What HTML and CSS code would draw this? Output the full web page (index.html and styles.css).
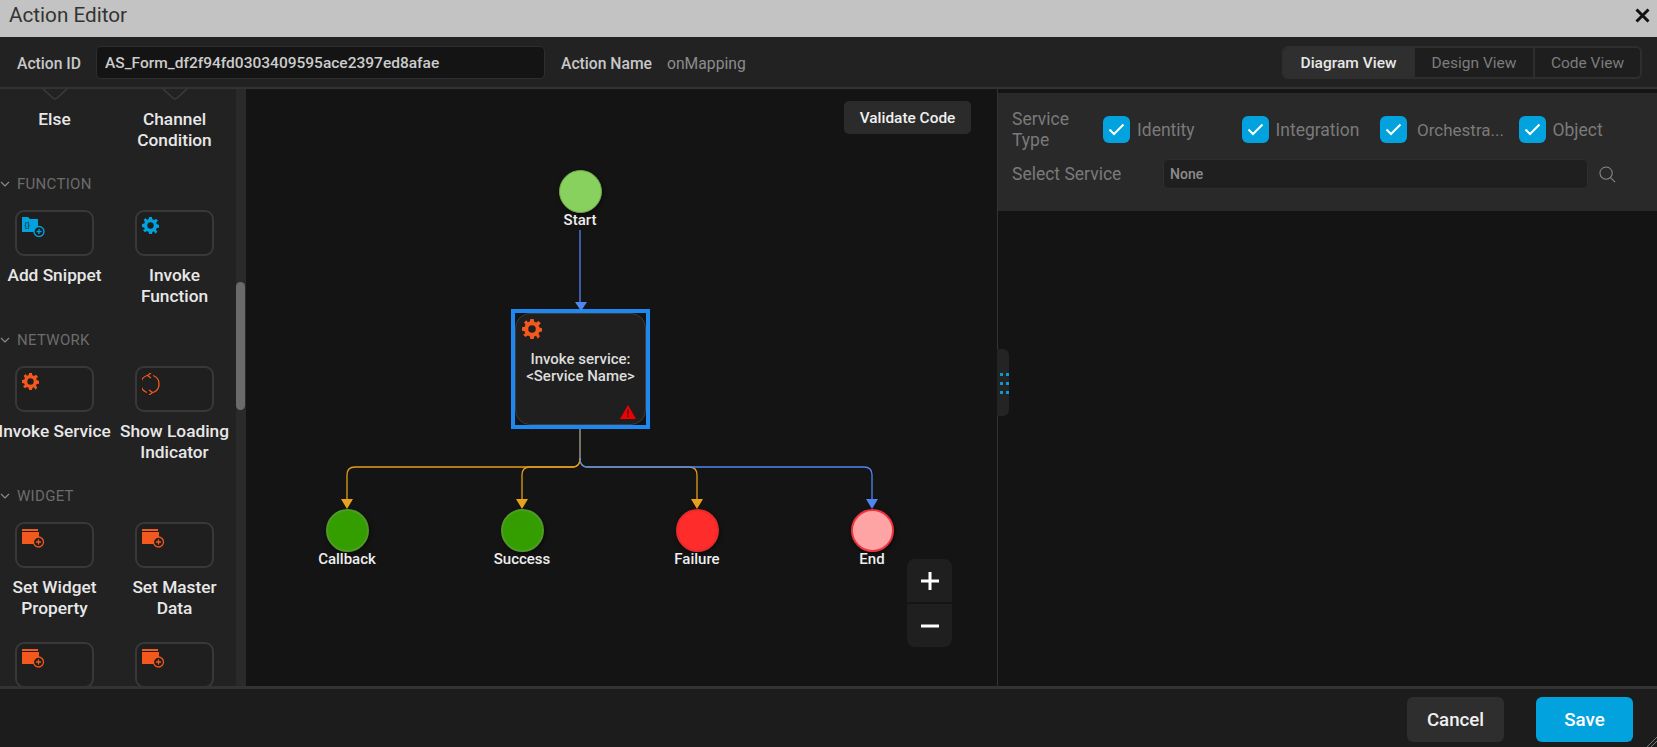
FILE: index.html
```html
<!DOCTYPE html>
<html lang="en">
<head>
    <meta charset="UTF-8">
    <title>Action Editor</title>
    <link rel="stylesheet" href="styles.css">
</head>
<body>
<div class="titlebar">
    <span class="title">Action Editor</span>
    <svg class="close" width="15" height="15" viewBox="0 0 15 15"><path d="M1.500 1.500 L13.500 13.500 M13.500 1.500 L1.500 13.500" stroke="#111" stroke-width="3"/></svg>
</div>

<div class="header">
    <label class="id-label">Action ID</label>
    <div class="id-input">AS_Form_df2f94fd0303409595ace2397ed8afae</div>
    <label class="name-label">Action Name</label>
    <span class="name-value">onMapping</span>
    <div class="tabs">
        <div class="tab tab-diagram active">Diagram View</div>
        <div class="tab tab-design">Design View</div>
        <div class="tab tab-code">Code View</div>
    </div>
</div>

<div class="main">
    <div class="palette">
        <div class="palette-list">
            <div class="tool-row top-row">
                <div class="tool">
                    <svg class="tips" width="30" height="11" viewBox="0 0 30 11"><path d="M3 0 L13 9 Q15 10.500 17 9 L27 0" fill="none" stroke="#3c3c3c" stroke-width="1.500"/></svg>
                    <div class="tool-name">Else</div>
                </div>
                <div class="tool">
                    <svg class="tips" width="30" height="11" viewBox="0 0 30 11"><path d="M3 0 L13 9 Q15 10.500 17 9 L27 0" fill="none" stroke="#3c3c3c" stroke-width="1.500"/></svg>
                    <div class="tool-name">Channel<br>Condition</div>
                </div>
            </div>

            <div class="section"><svg class="chev" width="10" height="6" viewBox="0 0 10 6"><path d="M1 1 L5 5 L9 1" fill="none" stroke="#8a8a8a" stroke-width="1.200"/></svg>FUNCTION</div>
            <div class="tool-row">
                <div class="tool">
                    <div class="tool-box">
                        <svg class="tool-icon" width="23" height="20" viewBox="0 0 23 20">
                            <path d="M0 0 H6 L8 2 H16 V15 H0 Z" fill="#02a2de"/>
                            <text x="2.500" y="10" class="snippet-mark">{}</text>
                            <circle cx="17" cy="14.500" r="5" fill="#1f1f1f" stroke="#02a2de" stroke-width="1.300"/>
                            <path d="M14.500 14.500 H19.500 M17 12 V17" stroke="#02a2de" stroke-width="1.300"/>
                        </svg>
                    </div>
                    <div class="tool-name">Add Snippet</div>
                </div>
                <div class="tool">
                    <div class="tool-box">
                        <svg class="tool-icon" width="17" height="17" viewBox="0 0 24 24"><path fill="#02a2de" fill-rule="evenodd" d="M10 0h4l.7 3.200 2.300 1 2.800-1.800 2.800 2.800L20 8l1 2.300 3 .7v4l-3.200.7-1 2.300 1.800 2.800-2.800 2.800L17 20l-2.300 1-.7 3h-4l-.7-3.200-2.300-1-2.800 1.800-2.800-2.800L4 17l-1-2.300-3-.7v-4l3.200-.7 1-2.300-1.800-2.800 2.800-2.800L7 4l2.300-1zM12 7.500a4.500 4.500 0 1 0 0 9 4.500 4.500 0 0 0 0-9z"/></svg>
                    </div>
                    <div class="tool-name">Invoke<br>Function</div>
                </div>
            </div>

            <div class="section"><svg class="chev" width="10" height="6" viewBox="0 0 10 6"><path d="M1 1 L5 5 L9 1" fill="none" stroke="#8a8a8a" stroke-width="1.200"/></svg>NETWORK</div>
            <div class="tool-row">
                <div class="tool">
                    <div class="tool-box">
                        <svg class="tool-icon" width="17" height="17" viewBox="0 0 24 24"><path fill="#f3591c" fill-rule="evenodd" d="M10 0h4l.7 3.200 2.300 1 2.800-1.800 2.800 2.800L20 8l1 2.300 3 .7v4l-3.200.7-1 2.300 1.800 2.800-2.800 2.800L17 20l-2.300 1-.7 3h-4l-.7-3.200-2.300-1-2.800 1.800-2.800-2.800L4 17l-1-2.300-3-.7v-4l3.200-.7 1-2.300-1.800-2.800 2.800-2.800L7 4l2.300-1zM12 7.500a4.500 4.500 0 1 0 0 9 4.500 4.500 0 0 0 0-9z"/></svg>
                    </div>
                    <div class="tool-name">Invoke Service</div>
                </div>
                <div class="tool">
                    <div class="tool-box">
                        <svg class="tool-icon" width="20" height="22" viewBox="2 0 20 22" fill="none" stroke="#f3591c" stroke-width="1.300"><path d="M7 2.500 A9 9 0 0 0 7 19.500"/><path d="M13 2.500 A9 9 0 0 1 13 19.500"/><path d="M11 0 L7.500 2.500 L11 5"/><path d="M9 17 L12.500 19.500 L9 22"/></svg>
                    </div>
                    <div class="tool-name">Show Loading<br>Indicator</div>
                </div>
            </div>

            <div class="section"><svg class="chev" width="10" height="6" viewBox="0 0 10 6"><path d="M1 1 L5 5 L9 1" fill="none" stroke="#8a8a8a" stroke-width="1.200"/></svg>WIDGET</div>
            <div class="tool-row">
                <div class="tool">
                    <div class="tool-box">
                        <svg class="tool-icon" width="23" height="19" viewBox="0 0 23 19"><path d="M0 0 H16 V2 H0 Z M0 3 H17 V15 H0 Z" fill="#f3591c"/><circle cx="16.500" cy="13" r="5" fill="#1f1f1f" stroke="#f3591c" stroke-width="1.300"/><path d="M14 13 H19 M16.500 10.500 V15.500" stroke="#f3591c" stroke-width="1.300"/></svg>
                    </div>
                    <div class="tool-name">Set Widget<br>Property</div>
                </div>
                <div class="tool">
                    <div class="tool-box">
                        <svg class="tool-icon" width="23" height="19" viewBox="0 0 23 19"><path d="M0 0 H16 V2 H0 Z M0 3 H17 V15 H0 Z" fill="#f3591c"/><circle cx="16.500" cy="13" r="5" fill="#1f1f1f" stroke="#f3591c" stroke-width="1.300"/><path d="M14 13 H19 M16.500 10.500 V15.500" stroke="#f3591c" stroke-width="1.300"/></svg>
                    </div>
                    <div class="tool-name">Set Master<br>Data</div>
                </div>
            </div>
            <div class="tool-row last-row">
                <div class="tool">
                    <div class="tool-box">
                        <svg class="tool-icon" width="23" height="19" viewBox="0 0 23 19"><path d="M0 0 H16 V2 H0 Z M0 3 H17 V15 H0 Z" fill="#f3591c"/><circle cx="16.500" cy="13" r="5" fill="#1f1f1f" stroke="#f3591c" stroke-width="1.300"/><path d="M14 13 H19 M16.500 10.500 V15.500" stroke="#f3591c" stroke-width="1.300"/></svg>
                    </div>
                </div>
                <div class="tool">
                    <div class="tool-box">
                        <svg class="tool-icon" width="23" height="19" viewBox="0 0 23 19"><path d="M0 0 H16 V2 H0 Z M0 3 H17 V15 H0 Z" fill="#f3591c"/><circle cx="16.500" cy="13" r="5" fill="#1f1f1f" stroke="#f3591c" stroke-width="1.300"/><path d="M14 13 H19 M16.500 10.500 V15.500" stroke="#f3591c" stroke-width="1.300"/></svg>
                    </div>
                </div>
            </div>
        </div>
    </div>
    <div class="scrolltrack"><div class="scrollthumb"></div></div>

    <div class="canvas">
        <svg class="wires" width="752" height="597" viewBox="246 89 752 597" fill="none" stroke-width="1.300">
            <path d="M580 230 V304" stroke="#4f86f0"/>
            <path d="M580 428 V458" stroke="#a9a39a"/>
            <path d="M580 458 Q580 467 573 467 H355 Q347 467 347 475 V500" stroke="#e39c1a"/>
            <path d="M580 458 Q580 467 573 467 H530 Q522 467 522 475 V500" stroke="#e39c1a"/>
            <path d="M580 458 Q580 467 587 467 H689 Q697 467 697 475 V500" stroke="#e39c1a"/>
            <path d="M580 458 Q580 467 587 467 H864 Q872 467 872 475 V500" stroke="#4f86f0"/>
            <path d="M341 499 H353 L347 509 Z" fill="#e8a01e"/>
            <path d="M516 499 H528 L522 509 Z" fill="#e8a01e"/>
            <path d="M691 499 H703 L697 509 Z" fill="#e8a01e"/>
            <path d="M866 499 H878 L872 509 Z" fill="#4f86f0"/>
        </svg>

        <button class="validate">Validate Code</button>

        <div class="node node-start"><div class="dot dot-start"></div><div class="node-label">Start</div></div>
        <div class="node node-callback"><div class="dot dot-green"></div><div class="node-label">Callback</div></div>
        <div class="node node-success"><div class="dot dot-green"></div><div class="node-label">Success</div></div>
        <div class="node node-failure"><div class="dot dot-red"></div><div class="node-label">Failure</div></div>
        <div class="node node-end"><div class="dot dot-end"></div><div class="node-label">End</div></div>

        <div class="step">
            <div class="step-inner">
                <svg class="step-gear" width="20" height="20" viewBox="0 0 24 24"><path fill="#f3591c" fill-rule="evenodd" d="M10 0h4l.7 3.200 2.300 1 2.800-1.800 2.800 2.800L20 8l1 2.300 3 .7v4l-3.200.7-1 2.300 1.800 2.800-2.800 2.800L17 20l-2.300 1-.7 3h-4l-.7-3.200-2.300-1-2.800 1.800-2.800-2.800L4 17l-1-2.300-3-.7v-4l3.200-.7 1-2.300-1.800-2.800 2.800-2.800L7 4l2.300-1zM12 7.500a4.500 4.500 0 1 0 0 9 4.500 4.500 0 0 0 0-9z"/></svg>
                <div class="step-text">Invoke service:<br>&lt;Service Name&gt;</div>
                <svg class="step-warn" width="16" height="14" viewBox="0 0 16 14"><path d="M8 0 L16 14 H0 Z" fill="#f00000"/><path d="M7.200 4.500 H8.800 L8.500 9.500 H7.500 Z M7.200 10.500 H8.800 V12 H7.200 Z" fill="#1f1f1f"/></svg>
            </div>
            <svg class="step-arrow" width="12" height="9" viewBox="0 0 12 9"><path d="M0 0 H12 L6 9 Z" fill="#4f86f0"/></svg>
        </div>

        <div class="zoomctl">
            <div class="zoom-btn"><svg width="18" height="18" viewBox="0 0 18 18"><path d="M9 0 V18 M0 9 H18" stroke="#fff" stroke-width="3"/></svg></div>
            <div class="zoom-btn"><svg width="18" height="18" viewBox="0 0 18 18"><path d="M0 9 H18" stroke="#fff" stroke-width="3"/></svg></div>
        </div>
    </div>

    <div class="props">
        <div class="handle">
            <span></span><span></span><span></span><span></span><span></span><span></span>
        </div>
        <div class="props-panel">
            <div class="type-row">
                <div class="prop-label type-label">Service<br>Type</div>
                <div class="check"><span class="box"><svg width="17" height="13" viewBox="0 0 17 13"><path d="M1.500 6.500 L6 11 L15.500 1.500" fill="none" stroke="#fff" stroke-width="2"/></svg></span><span class="check-text">Identity</span></div>
                <div class="check"><span class="box"><svg width="17" height="13" viewBox="0 0 17 13"><path d="M1.500 6.500 L6 11 L15.500 1.500" fill="none" stroke="#fff" stroke-width="2"/></svg></span><span class="check-text">Integration</span></div>
                <div class="check"><span class="box"><svg width="17" height="13" viewBox="0 0 17 13"><path d="M1.500 6.500 L6 11 L15.500 1.500" fill="none" stroke="#fff" stroke-width="2"/></svg></span><span class="check-text check-cut">Orchestra...</span></div>
                <div class="check"><span class="box"><svg width="17" height="13" viewBox="0 0 17 13"><path d="M1.500 6.500 L6 11 L15.500 1.500" fill="none" stroke="#fff" stroke-width="2"/></svg></span><span class="check-text">Object</span></div>
            </div>
            <div class="select-row">
                <div class="prop-label select-label">Select Service</div>
                <div class="select-input">None</div>
                <svg class="search" width="17" height="17" viewBox="0 0 18 18" fill="none" stroke="#8a8a8a" stroke-width="1.100"><circle cx="7.500" cy="7.500" r="6.500"/><path d="M12.200 12.200 L17 17"/></svg>
            </div>
        </div>
    </div>
</div>

<div class="footer">
    <button class="btn btn-cancel">Cancel</button>
    <button class="btn btn-save">Save</button>
    <svg class="grip" width="11" height="11" viewBox="0 0 11 11"><path d="M11 1 L1 11 M11 5 L5 11" stroke="#777" stroke-width="1"/></svg>
</div>
</body>
</html>
```

FILE: styles.css
```css
* {
    box-sizing: border-box;
}
html, body {
    height: 100%;
}
body {
    margin: 0;
    height: 747px;
    overflow: hidden;
    display: flex;
    flex-direction: column;
    background: #1c1c1c;
    font-family: Roboto, "Liberation Sans", sans-serif;
    color: #e6e6e6;
}

/* title bar */
.titlebar {
    height: 37px;
    flex: none;
    background: #c3c3c3;
    display: flex;
    align-items: center;
    justify-content: space-between;
    padding: 0 7px 7px 9px;
}
.title {
    font-size: 20.700px;
    color: #333;
}

/* header */
.header {
    height: 52px;
    flex: none;
    background: #222;
    border-bottom: 2px solid #333;
    display: flex;
    align-items: center;
    padding: 0 15px 0 17px;
}
.id-label {
    font-size: 15.700px;
    font-weight: 500;
    color: #c8c8c8;
    width: 79px;
    padding-top: 2px;
}
.id-input {
    width: 449px;
    height: 33px;
    background: #141414;
    border: 1px solid #2e2e2e;
    border-radius: 5px;
    font-size: 15.500px;
    font-weight: 500;
    color: #ccc;
    line-height: 33px;
    padding-left: 8px;
}
.name-label {
    margin-left: 16px;
    font-size: 15.700px;
    font-weight: 500;
    color: #c8c8c8;
    width: 106px;
    padding-top: 2px;
}
.name-value {
    font-size: 15.700px;
    color: #8c8c8c;
    padding-top: 2px;
}
.tabs {
    margin-left: auto;
    display: flex;
    height: 33px;
    border: 2px solid #2e2e2e;
    border-radius: 6px;
    background: #1e1e1e;
    overflow: hidden;
}
.tab {
    font-size: 15.500px;
    color: #7c7c7c;
    text-align: center;
    line-height: 31px;
    border-left: 2px solid #2e2e2e;
}
.tab-diagram {
    width: 129px;
    border-left: none;
}
.tab-design {
    width: 120px;
}
.tab-code {
    width: 107px;
}
.tab.active {
    background: #2f2f2f;
    color: #e8e8e8;
    font-weight: 500;
}

/* main area */
.main {
    height: 597px;
    flex: none;
    display: flex;
    background: #141414;
}

/* palette */
.palette {
    width: 236px;
    flex: none;
    background: #222;
    overflow: hidden;
}
.tool-row {
    display: flex;
    padding-left: 15px;
    gap: 41px;
}
.tool {
    width: 79px;
    flex: none;
    display: flex;
    flex-direction: column;
    align-items: center;
}
.tips {
    display: block;
    height: 11px;
    flex: none;
}
.tool-box {
    width: 79px;
    height: 46px;
    background: #1f1f1f;
    border: 2px solid #383838;
    border-radius: 9px;
    padding: 5px 0 0 5px;
}
.tool-icon {
    display: block;
}
.snippet-mark {
    font-size: 8px;
    fill: #1f1f1f;
    font-family: "Liberation Sans", sans-serif;
}
.tool-name {
    margin-top: 9px;
    font-size: 17.300px;
    font-weight: 500;
    line-height: 21px;
    color: #e8e8e8;
    text-align: center;
    white-space: nowrap;
}
.section {
    height: 20px;
    margin-top: 23px;
    margin-bottom: 16px;
    display: flex;
    align-items: center;
    font-size: 15px;
    color: #6c6c6c;
    letter-spacing: .3px;
}
.chev {
    margin-right: 7px;
}
.last-row {
    margin-top: 23px;
}

.scrolltrack {
    width: 10px;
    flex: none;
    background: #2a2a2a;
    padding-top: 193px;
}
.scrollthumb {
    width: 9px;
    height: 128px;
    border-radius: 5px;
    background: #6a6a6a;
}

/* diagram canvas */
.canvas {
    position: relative;
    width: 751px;
    flex: none;
    background: #141414;
}
.wires {
    position: absolute;
    left: 0;
    top: 0;
}
.validate {
    position: absolute;
    left: 598px;
    top: 12px;
    width: 127px;
    height: 33px;
    background: #2b2b2b;
    color: #f0f0f0;
    border: none;
    border-radius: 5px;
    font-family: inherit;
    font-size: 15.400px;
    font-weight: 500;
}
.node {
    position: absolute;
    width: 80px;
    display: flex;
    flex-direction: column;
    align-items: center;
}
.node-start { left: 294px; top: 81px; }
.node-callback { left: 61px; top: 419.500px; }
.node-success { left: 236px; top: 419.500px; }
.node-failure { left: 411px; top: 419.500px; }
.node-end { left: 586px; top: 419.500px; }
.dot {
    width: 43px;
    height: 43px;
    flex: none;
    border-radius: 50%;
    box-shadow: 1px 2px 4px rgba(0, 0, 0, .5);
}
.dot-start {
    background: #88d15f;
    border: 1px solid #6fa84c;
}
.dot-green {
    background: #349e00;
    border: 2px solid #4f9a26;
}
.dot-red {
    background: #ff2c2c;
    border: 2px solid #e82a2a;
}
.dot-end {
    background: #ffa4a4;
    border: 2px solid #ef3340;
}
.node-label {
    margin-top: -2px;
    font-size: 15px;
    font-weight: 500;
    line-height: 19px;
    color: #eee;
}
.step {
    position: absolute;
    left: 265px;
    top: 220px;
    width: 139px;
    height: 120px;
    border: 4px solid #1e88f0;
    background: #141414;
}
.step-inner {
    position: relative;
    height: 100%;
    background: #1f1f1f;
    border: 1px solid #3c3c3c;
    border-radius: 15px;
    display: flex;
    align-items: center;
    justify-content: center;
}
.step-arrow {
    position: absolute;
    left: 59.500px;
    top: -11px;
}
.step-gear {
    position: absolute;
    left: 6px;
    top: 5px;
}
.step-warn {
    position: absolute;
    right: 9px;
    bottom: 5px;
}
.step-text {
    font-size: 15px;
    font-weight: 500;
    line-height: 17px;
    color: #ddd;
    text-align: center;
    margin-top: -2px;
}
.zoomctl {
    position: absolute;
    left: 661px;
    top: 470px;
    width: 45px;
    height: 88px;
    display: flex;
    flex-direction: column;
    gap: 2px;
    border-radius: 8px;
    overflow: hidden;
}
.zoom-btn {
    flex: 1;
    background: #1f1f1f;
    display: flex;
    align-items: center;
    justify-content: center;
}

/* right panel */
.props {
    position: relative;
    flex: 1;
    border-left: 1px solid #333;
    padding-top: 4px;
}
.handle {
    position: absolute;
    left: -1px;
    top: 260px;
    width: 12px;
    height: 67px;
    background: #242424;
    border-radius: 0 6px 6px 0;
    padding: 24px 1px 0 3px;
    display: grid;
    grid-template-columns: 3px 3px;
    grid-auto-rows: 3px;
    column-gap: 3px;
    row-gap: 6px;
}
.handle span {
    background: #0a9bd6;
}
.props-panel {
    height: 118px;
    background: #292929;
    padding: 15px 0 0 14px;
}
.type-row {
    display: flex;
    align-items: center;
}
.prop-label {
    font-size: 17.500px;
    color: #7a7a7a;
    line-height: 21px;
}
.type-label {
    width: 91px;
    padding-top: 1px;
}
.check {
    width: 138.500px;
    display: flex;
    align-items: center;
    flex: none;
}
.box {
    width: 27px;
    height: 27px;
    border-radius: 6px;
    background: #02a2de;
    display: flex;
    align-items: center;
    justify-content: center;
    margin-right: 7px;
    flex: none;
}
.check-text {
    font-size: 17.500px;
    color: #7a7a7a;
}
.check-cut {
    margin-left: 3px;
    font-size: 17px;
}
.select-row {
    margin-top: 8px;
    display: flex;
    align-items: center;
}
.select-label {
    width: 151px;
}
.select-input {
    width: 425px;
    height: 30px;
    background: #1f1f1f;
    border: 1px solid #2e2e2e;
    border-radius: 5px;
    font-size: 14px;
    font-weight: 500;
    color: #8c8c8c;
    line-height: 28px;
    padding-left: 6px;
}
.search {
    margin-left: 11px;
}

/* footer */
.footer {
    position: relative;
    flex: 1;
    border-top: 3px solid #333;
    background: #1c1c1c;
    display: flex;
    justify-content: flex-end;
    align-items: flex-start;
    gap: 32px;
    padding: 8px 24px 0 0;
}
.btn {
    width: 97px;
    height: 45px;
    border: none;
    border-radius: 6px;
    font-family: inherit;
    font-size: 18.700px;
    font-weight: 500;
    color: #f0f0f0;
}
.btn-cancel {
    background: #2e2e2e;
}
.btn-save {
    background: #02a2de;
    color: #fff;
}
.grip {
    position: absolute;
    right: 0;
    bottom: 0;
}
```
